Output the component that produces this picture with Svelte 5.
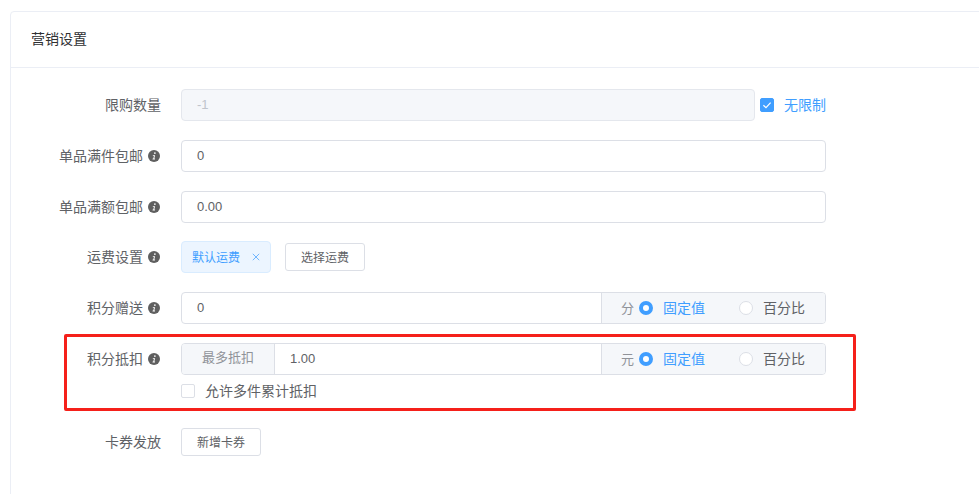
<script>
	const modes = ['固定值', '百分比'];
</script>

{#snippet help()}
	<svg class="help" viewBox="0 0 12 12" aria-hidden="true">
		<circle cx="6" cy="6" r="6" fill="#5f5f5f" />
		<path d="M6.9 2.2a.85.85 0 1 1-.01 1.7.85.85 0 0 1 .01-1.7zM4.7 5.2h2.4L6.3 8.6h.8l-.2.8H4.5l.2-.8h.6l.6-2.6h-.9z" fill="#fff" />
	</svg>
{/snippet}

{#snippet radios(unit)}
	<div class="addon">
		<span class="unit">{unit}</span>
		{#each modes as mode, i}
			<span class={['radio', { on: i === 0 }]}>
				<i class="dot"></i>
				<span class="radio-text">{mode}</span>
			</span>
		{/each}
	</div>
{/snippet}

<div class="page">
	<section class="card">
		<header class="card-head">营销设置</header>
		<div class="card-body">
			<div class="row">
				<div class="label"><span class="lift">限购数量</span></div>
				<div class="field">
					<div class="input disabled limit">-1</div>
					<span class="check checked"><i class="box">
						<svg viewBox="0 0 14 14" aria-hidden="true"><path d="M3.4 7.2l2.6 2.5 4.6-5" fill="none" stroke="#fff" stroke-width="1.2" /></svg>
					</i><span class="check-text lift">无限制</span></span>
				</div>
			</div>

			<div class="row">
				<div class="label"><span class="lift">单品满件包邮</span>{@render help()}</div>
				<div class="field"><div class="input wide">0</div></div>
			</div>

			<div class="row before-tag">
				<div class="label"><span class="lift">单品满额包邮</span>{@render help()}</div>
				<div class="field"><div class="input wide">0.00</div></div>
			</div>

			<div class="row">
				<div class="label"><span class="lift">运费设置</span>{@render help()}</div>
				<div class="field">
					<span class="tag"><span class="lift">默认运费</span><svg viewBox="0 0 10 10" aria-hidden="true"><path d="M1 1l8 8M9 1l-8 8" fill="none" stroke="#409eff" stroke-width=".9" /></svg></span>
					<button class="btn ship"><span class="lift">选择运费</span></button>
				</div>
			</div>

			<div class="row">
				<div class="label"><span class="lift">积分赠送</span>{@render help()}</div>
				<div class="field">
					<div class="group">
						<div class="group-input">0</div>
						{@render radios('分')}
					</div>
				</div>
			</div>

			<div class="row deduct">
				<div class="label"><span class="lift">积分抵扣</span>{@render help()}</div>
				<div class="stack">
					<div class="group">
						<div class="prepend"><span class="lift">最多抵扣</span></div>
						<div class="group-input">1.00</div>
						{@render radios('元')}
					</div>
					<span class="check plain"><i class="box"></i><span class="check-text lift">允许多件累计抵扣</span></span>
				</div>
			</div>

			<div class="row last">
				<div class="label"><span class="lift">卡券发放</span></div>
				<div class="field"><button class="btn"><span class="lift">新增卡券</span></button></div>
			</div>
		</div>
	</section>
	<div class="mark"></div>
</div>

<style>
	:global(body) {
		margin: 0;
		background: #fff;
		overflow: hidden;
	}

	.page {
		position: relative;
		height: 494px;
		overflow: hidden;
		padding: 11px 0 0 10px;
		box-sizing: border-box;
		font-family: "Liberation Sans", "Noto Sans CJK SC", sans-serif;
		font-size: 14px;
		color: #606266;
	}

	/* the CJK fallback sits low in the line box */
	.lift {
		display: inline-block;
		transform: translateY(-1.5px);
	}

	.card {
		width: 1100px;
		height: 600px;
		border: 1px solid #ebeef5;
		border-radius: 4px;
		box-sizing: border-box;
	}

	.card-head {
		height: 56px;
		padding-left: 20px;
		line-height: 55px;
		color: #303133;
		border-bottom: 1px solid #ebeef5;
		box-sizing: border-box;
	}

	.card-body {
		padding-top: 21px;
	}

	.row {
		display: flex;
		align-items: flex-start;
		margin-bottom: 19px;
	}

	.before-tag {
		margin-bottom: 18px;
	}

	.deduct {
		margin-bottom: 0;
		height: 85px;
	}

	.label {
		width: 150px;
		height: 32px;
		display: flex;
		align-items: center;
		justify-content: flex-end;
		flex: none;
		margin-right: 20px;
	}

	.help {
		width: 12px;
		height: 12px;
		margin: 0 1px 0 5px;
	}

	.field {
		display: flex;
		align-items: center;
		height: 32px;
	}

	.input {
		height: 32px;
		line-height: 30px;
		padding-left: 15px;
		border: 1px solid #dcdfe6;
		border-radius: 4px;
		box-sizing: border-box;
		background: #fff;
		font-size: 13px;
	}

	.wide {
		width: 645px;
	}

	.limit {
		width: 574px;
	}

	.disabled {
		background: #f5f7fa;
		border-color: #e4e7ed;
		color: #c0c4cc;
	}

	.check {
		display: inline-flex;
		align-items: center;
	}

	.checked {
		margin-left: 5px;
		color: #409eff;
	}

	.box {
		width: 14px;
		height: 14px;
		display: block;
		flex: none;
		border: 1px solid #dcdfe6;
		border-radius: 2px;
		box-sizing: border-box;
		background: #fff;
	}

	.checked .box {
		background: #409eff;
		border-color: #409eff;
	}

	.box svg {
		display: block;
		width: 14px;
		height: 14px;
		margin: -1px;
	}

	.check-text {
		margin-left: 10px;
	}

	.tag {
		display: inline-flex;
		align-items: center;
		width: 90px;
		height: 32px;
		padding-left: 10px;
		box-sizing: border-box;
		color: #409eff;
		font-size: 12px;
		background: #ecf5ff;
		border: 1px solid #d9ecff;
		border-radius: 4px;
	}

	.tag svg {
		width: 8px;
		height: 8px;
		margin-left: 12px;
	}

	.btn {
		width: 80px;
		height: 28px;
		padding: 0;
		font: inherit;
		font-size: 12px;
		color: #606266;
		background: #fff;
		border: 1px solid #dcdfe6;
		border-radius: 3px;
	}

	.ship {
		margin-left: 14px;
	}

	.group {
		display: flex;
		width: 645px;
		height: 32px;
		border: 1px solid #dcdfe6;
		border-radius: 4px;
		box-sizing: border-box;
		overflow: hidden;
	}

	.group-input {
		flex: 1;
		padding-left: 15px;
		line-height: 30px;
		font-size: 13px;
	}

	.prepend {
		width: 93px;
		flex: none;
		text-align: center;
		line-height: 30px;
		font-size: 13px;
		color: #909399;
		background: #f5f7fa;
		border-right: 1px solid #dcdfe6;
		box-sizing: border-box;
	}

	.addon {
		width: 224px;
		flex: none;
		display: flex;
		align-items: center;
		padding-left: 19px;
		box-sizing: border-box;
		color: #909399;
		background: #f5f7fa;
		border-left: 1px solid #dcdfe6;
	}

	.unit {
		width: 13px;
		font-size: 13px;
		transform: translateY(-1px);
	}

	.radio {
		display: inline-flex;
		align-items: center;
		color: #606266;
		margin-left: 5px;
	}

	.radio + .radio {
		margin-left: 34px;
	}

	.dot {
		width: 14px;
		height: 14px;
		display: block;
		border: 1px solid #dcdfe6;
		border-radius: 50%;
		box-sizing: border-box;
		background: #fff;
	}

	.on {
		color: #409eff;
	}

	.on .dot {
		border: 4.5px solid #409eff;
	}

	.radio-text {
		margin-left: 10px;
		transform: translateY(-1px);
	}

	.stack {
		display: flex;
		flex-direction: column;
	}

	.plain {
		margin-top: 9px;
		height: 14px;
	}

	.last .field {
		height: 28px;
	}

	.last .label {
		height: 28px;
	}

	.mark {
		position: absolute;
		left: 64px;
		top: 334px;
		width: 792px;
		height: 77px;
		box-sizing: border-box;
		border: 3px solid #f5201a;
		border-radius: 2px;
	}
</style>
